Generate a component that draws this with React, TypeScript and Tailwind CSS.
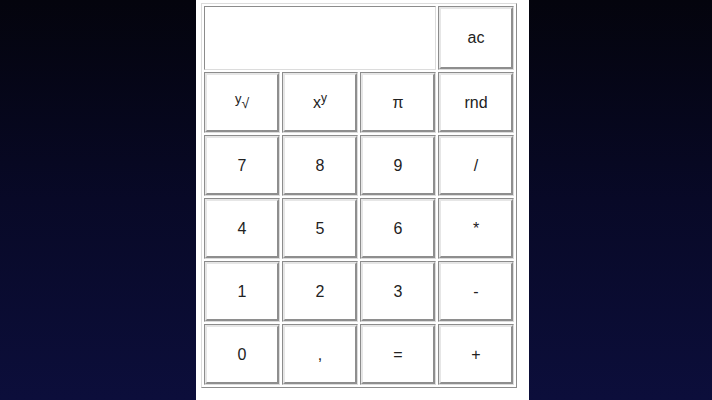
import React from "react";

const rows: React.ReactNode[][] = [
  [
    <span key="root" className="inline-flex items-start">
      <span className="text-[13px] leading-none -mt-[4px]">y</span>
      <span className="text-[14px] leading-none">√</span>
    </span>,
    <span key="pow" className="inline-flex items-start leading-none">
      <span className="text-[16px]">x</span>
      <span className="text-[12px] -mt-[3px]">y</span>
    </span>,
    "π",
    "rnd",
  ],
  ["7", "8", "9", "/"],
  ["4", "5", "6", "*"],
  ["1", "2", "3", "-"],
  ["0", ",", "=", "+"],
];

function Key({ label, tall }: { label: React.ReactNode; tall?: boolean }) {
  return (
    <td className="p-0 border border-solid border-t-[#8c8c8c] border-l-[#8c8c8c] border-b-[#dcdcdc] border-r-[#dcdcdc]">
      <button
        type="button"
        className={`flex w-[74px] ${tall ? "h-[62px]" : "h-[59px]"} items-center justify-center bg-white text-[16px] text-[#222] border-2 border-solid border-t-[#e6e6e6] border-l-[#e6e6e6] border-b-[#8e8e8e] border-r-[#8e8e8e]`}
      >
        {label}
      </button>
    </td>
  );
}

export default function App() {
  return (
    <div
      className="flex h-[400px] w-full overflow-hidden bg-gradient-to-b from-[#04040d] via-[#080927] to-[#0c0e3b]"
      style={{ fontFamily: '"Liberation Sans", Arial, sans-serif' }}
    >
      <div className="ml-[196px] h-full w-[333px] bg-white pl-[5px] pt-[3px]">
        <table className="border-separate border-spacing-[2px] border border-solid border-t-[#dcdcdc] border-l-[#dcdcdc] border-b-[#8c8c8c] border-r-[#8c8c8c]">
          <tbody>
            <tr>
              <td
                colSpan={3}
                className="h-[64px] p-0 border border-solid border-t-[#8c8c8c] border-l-[#8c8c8c] border-b-[#dcdcdc] border-r-[#dcdcdc] bg-white"
              >
                <div className="h-[62px] w-full" />
              </td>
              <Key label="ac" tall />
            </tr>
            {rows.map((row, i) => (
              <tr key={i}>
                {row.map((label, j) => (
                  <Key key={j} label={label} />
                ))}
              </tr>
            ))}
          </tbody>
        </table>
      </div>
    </div>
  );
}
